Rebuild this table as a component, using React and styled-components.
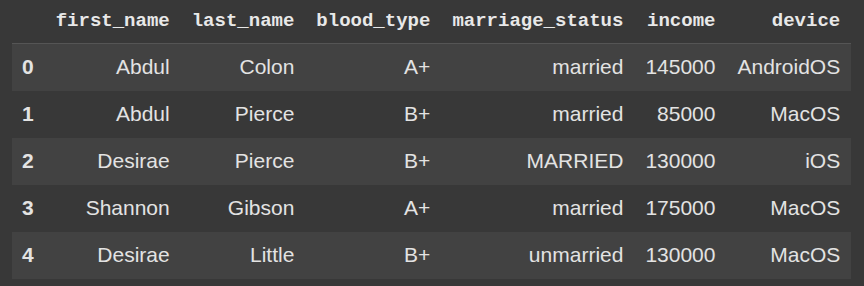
import React from "react";
import styled, { createGlobalStyle } from "styled-components";

const GlobalStyle = createGlobalStyle`
  html, body {
    margin: 0;
    padding: 0;
    background: #383838;
  }
`;

const columns = ["first_name", "last_name", "blood_type", "marriage_status", "income", "device"];

const rows = [
  ["Abdul", "Colon", "A+", "married", "145000", "AndroidOS"],
  ["Abdul", "Pierce", "B+", "married", "85000", "MacOS"],
  ["Desirae", "Pierce", "B+", "MARRIED", "130000", "iOS"],
  ["Shannon", "Gibson", "A+", "married", "175000", "MacOS"],
  ["Desirae", "Little", "B+", "unmarried", "130000", "MacOS"],
];

const Page = styled.div`
  padding: 0 13px 0 12px;
  height: 286px;
  box-sizing: border-box;
`;

const Table = styled.table`
  border-collapse: collapse;
  border-spacing: 0;
  width: 839px;
  font-family: "Liberation Sans", Arial, sans-serif;
  color: #e3e3e3;
`;

const HeadCell = styled.th`
  height: 43px;
  padding: 0 11px;
  text-align: right;
  font-family: "Liberation Mono", "DejaVu Sans Mono", monospace;
  font-size: 19px;
  font-weight: bold;
  color: #e8e8e8;
  border-bottom: 1px solid #555555;
  white-space: nowrap;
  box-sizing: border-box;
`;

const Row = styled.tr`
  background: ${(p) => (p.$striped ? "#424242" : "#383838")};
`;

const IndexCell = styled.th`
  height: 47px;
  padding: 0 11px 0 10px;
  text-align: left;
  font-size: 21px;
  font-weight: bold;
  color: #e3e3e3;
`;

const Cell = styled.td`
  height: 47px;
  padding: 0 11px;
  text-align: right;
  font-size: 21px;
  white-space: nowrap;
`;

export default function App() {
  return (
    <Page>
      <GlobalStyle />
      <Table>
        <thead>
          <tr>
            <HeadCell />
            {columns.map((c) => (
              <HeadCell key={c}>{c}</HeadCell>
            ))}
          </tr>
        </thead>
        <tbody>
          {rows.map((r, i) => (
            <Row key={i} $striped={i % 2 === 0}>
              <IndexCell>{i}</IndexCell>
              {r.map((v, j) => (
                <Cell key={j}>{v}</Cell>
              ))}
            </Row>
          ))}
        </tbody>
      </Table>
    </Page>
  );
}
